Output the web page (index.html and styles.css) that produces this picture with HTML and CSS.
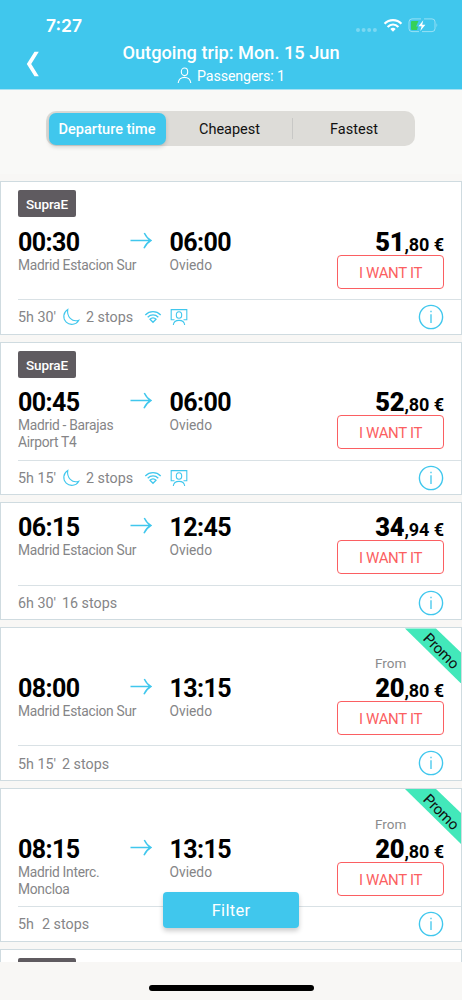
FILE: index.html
```
<!DOCTYPE html>
<html lang="en">
<head>
<meta charset="utf-8">
<title>Outgoing trip</title>
<link rel="stylesheet" href="styles.css">
</head>
<body>
<svg class="defs" width="0" height="0">
  <symbol id="arrow" viewBox="0 0 22 18"><path d="M0.5 8.500H20.500M14.300 1C15.800 4 17.800 6.800 20.800 8.500C17.800 10.200 15.500 13 14 16.200"/></symbol>
  <symbol id="moon" viewBox="0 0 18 18"><path d="M5.800 1.400A8 8 0 1 0 16.800 12.200C10 14.500 4.500 8.500 5.800 1.400Z"/></symbol>
  <symbol id="wifi" viewBox="0 0 18 14"><path d="M1.300 5C5.700 .6 12.300 .6 16.700 5M3.700 7.200C6.800 4.200 11.200 4.200 14.300 7.200M6 9.300C7.700 7.500 10.300 7.500 12 9.300L9 12.300Z"/></symbol>
  <symbol id="screen" viewBox="0 0 18 18"><path d="M4.500 11.800H1.200V1.600H16.800V11.800H13.500M3.300 17C4 10.800 14 10.800 14.700 17"/><ellipse cx="9" cy="7" rx="2.700" ry="3.300"/></symbol>
  <symbol id="info" viewBox="0 0 26 26"><circle cx="13" cy="13" r="11.600" stroke-width="1.400"/><path d="M13 10.300V19M13 6.800V8.300" stroke-width="1.300"/></symbol>
</svg>
<div class="screen">
  <header class="header">
    <div class="status">
      <span class="clock">7:27</span>
      <svg class="system" width="84" height="16" viewBox="0 0 84 16">
        <g fill="#fff" opacity=".3"><circle cx="3" cy="12" r="2"/><circle cx="8.600" cy="12" r="2"/><circle cx="14.200" cy="12" r="2"/><circle cx="19.900" cy="12" r="2"/></g>
        <g fill="none" stroke="#fff" stroke-width="2.300"><path d="M29.600 5.800C34.200 .9 41.800 .9 46.400 5.800M32.600 9C35.800 5.900 40.200 5.900 43.400 9"/></g>
        <path d="M35.300 11Q38 8.700 40.700 11L38 13.700Z" fill="#fff"/>
        <path d="M66 .9H57Q54 .9 54 3.900V10.600Q54 13.600 57 13.600H64M69 .9H77Q80 .9 80 3.900V10.600Q80 13.600 77 13.600H67" fill="none" stroke="#fff" stroke-opacity=".45"/>
        <path d="M81.500 5Q83.300 7.200 81.500 9.500Z" fill="#fff" opacity=".45"/>
        <path d="M57 3H63.500L61 8.500H63L62 11.900H57Q56 11.900 56 10.900V4Q56 3 57 3Z" fill="#35d158"/>
        <path d="M68.300 2.300L63.500 8.200H66.600L65.300 13L70.400 6.700H67.200Z" fill="#fff"/>
      </svg>
    </div>
    <div class="nav">
      <svg class="back" width="14" height="26" viewBox="0 0 14 26"><path d="M8.500 .8H12.800L5.200 13L12.800 25.200H8.500L.8 13Z" fill="#fff"/></svg>
      <div class="heading">
        <h1 class="title">Outgoing trip: Mon. 15 Jun</h1>
        <div class="passengers">
          <svg width="15" height="17" viewBox="0 0 15 17" fill="none" stroke="#fff" stroke-width="1.100"><ellipse cx="7.500" cy="4.800" rx="3.200" ry="3.800"/><path d="M1.200 16C1.800 8.500 13.200 8.500 13.800 16"/></svg>
          <span>Passengers: 1</span>
        </div>
      </div>
    </div>
  </header>
  <div class="sort">
    <div class="tabs">
      <div class="tab tab-on"><span>Departure time</span></div>
      <div class="tab tab-mid"><span>Cheapest</span></div>
      <div class="tab"><span>Fastest</span></div>
    </div>
  </div>
  <main class="list">
    <article class="card">
      <div class="head"><span class="badge">SupraE</span></div>
      <div class="trip">
        <div class="route">
          <span class="time">00:30</span><svg class="arrow"><use href="#arrow"/></svg><span class="time">06:00</span>
          <span class="place from-place">Madrid Estacion Sur</span><span class="place">Oviedo</span>
        </div>
        <div class="buy"><div class="price"><b>51</b>,80 <i>€</i></div><div class="want">I WANT IT</div></div>
      </div>
      <div class="foot"><span class="dur">5h 30'</span><svg class="moon"><use href="#moon"/></svg><span class="stops">2 stops</span><svg class="wifi"><use href="#wifi"/></svg><svg class="media"><use href="#screen"/></svg><svg class="info"><use href="#info"/></svg></div>
    </article>
    <article class="card">
      <div class="head"><span class="badge">SupraE</span></div>
      <div class="trip">
        <div class="route">
          <span class="time">00:45</span><svg class="arrow"><use href="#arrow"/></svg><span class="time">06:00</span>
          <span class="place from-place">Madrid - Barajas<br>Airport T4</span><span class="place">Oviedo</span>
        </div>
        <div class="buy"><div class="price"><b>52</b>,80 <i>€</i></div><div class="want">I WANT IT</div></div>
      </div>
      <div class="foot"><span class="dur">5h 15'</span><svg class="moon"><use href="#moon"/></svg><span class="stops">2 stops</span><svg class="wifi"><use href="#wifi"/></svg><svg class="media"><use href="#screen"/></svg><svg class="info"><use href="#info"/></svg></div>
    </article>
    <article class="card card-short">
      <div class="trip">
        <div class="route">
          <span class="time">06:15</span><svg class="arrow"><use href="#arrow"/></svg><span class="time">12:45</span>
          <span class="place from-place">Madrid Estacion Sur</span><span class="place">Oviedo</span>
        </div>
        <div class="buy"><div class="price"><b>34</b>,94 <i>€</i></div><div class="want">I WANT IT</div></div>
      </div>
      <div class="foot"><span class="dur">6h 30'</span><span class="stops">16 stops</span><svg class="info"><use href="#info"/></svg></div>
    </article>
    <article class="card">
      <div class="head"><span class="from">From</span></div>
      <div class="promo"><span>Promo</span></div>
      <div class="trip">
        <div class="route">
          <span class="time">08:00</span><svg class="arrow"><use href="#arrow"/></svg><span class="time">13:15</span>
          <span class="place from-place">Madrid Estacion Sur</span><span class="place">Oviedo</span>
        </div>
        <div class="buy"><div class="price"><b>20</b>,80 <i>€</i></div><div class="want">I WANT IT</div></div>
      </div>
      <div class="foot"><span class="dur">5h 15'</span><span class="stops">2 stops</span><svg class="info"><use href="#info"/></svg></div>
    </article>
    <article class="card">
      <div class="head"><span class="from">From</span></div>
      <div class="promo"><span>Promo</span></div>
      <div class="trip">
        <div class="route">
          <span class="time">08:15</span><svg class="arrow"><use href="#arrow"/></svg><span class="time">13:15</span>
          <span class="place from-place">Madrid Interc.<br>Moncloa</span><span class="place">Oviedo</span>
        </div>
        <div class="buy"><div class="price"><b>20</b>,80 <i>€</i></div><div class="want">I WANT IT</div></div>
      </div>
      <div class="foot"><span class="dur dur-hours">5h</span><span class="stops">2 stops</span><svg class="info"><use href="#info"/></svg></div>
    </article>
    <article class="card">
      <div class="head"><span class="badge"></span></div>
    </article>
  </main>
  <div class="filter">Filter</div>
  <footer class="home"><div class="home-bar"></div></footer>
</div>
</body>
</html>
```
FILE: styles.css
```
* { box-sizing: border-box; }
body { margin: 0; background: #f8f7f5; font-family: Roboto, "Liberation Sans", sans-serif; }
.defs { position: absolute; }
.screen { position: relative; width: 462px; height: 1000px; display: flex; flex-direction: column; overflow: hidden; white-space: nowrap; }

.header { height: 90px; flex: none; border-bottom: 1px solid #a9e2f3; background: #40c7ed; color: #fff; }
.status { height: 42px; padding: 15px 23px 0 46px; display: flex; justify-content: space-between; }
.clock { font: 600 17.500px/22px Inter, sans-serif; }
.system { margin-top: 3px; }
.nav { display: flex; }
.back { margin: 9px 0 0 26px; }
.heading { flex: 1; padding-right: 40px; text-align: center; }
.title { margin: 0; font-size: 18.200px; line-height: 21px; font-weight: 500; }
.passengers { display: flex; justify-content: center; gap: 5px; font-size: 14.200px; line-height: 26px; letter-spacing: -.1px; }
.passengers svg { margin-top: 4px; }

.sort { height: 84px; flex: none; padding: 21px 47px 0 46px; background: #f9f9f7; }
.tabs { display: grid; grid-template-columns: 117px 127px 1fr; height: 35px; padding: 2px 0 2px 3px; border-radius: 10px; background: #dddcd8; }
.tab { display: flex; align-items: center; justify-content: center; font-size: 14.500px; line-height: 31px; color: #111; }
.tab span { padding-top: 1px; }
.tab-on { border-radius: 7px; background: #40c7ed; color: #fff; font-weight: 500; box-shadow: 0 2px 4px rgba(0,0,0,.16); }
.tab-on span { margin-left: -1px; }
.tab-mid { position: relative; }
.tab-mid::after { content: ""; position: absolute; right: 0; top: 5px; width: 1px; height: 21px; background: #c8c8c6; }

.list { height: 788px; flex: none; padding-top: 7px; display: flex; flex-direction: column; gap: 7px; overflow: hidden; }
.card { position: relative; flex: none; height: 153.700px; border: 1px solid #cfdbe0; background: #fff; display: flex; flex-direction: column; overflow: hidden; }
.card-short { height: 118px; }
.head { height: 35.700px; flex: none; padding: 8px 17px 0; display: flex; }
.badge { width: 58px; height: 27px; border-radius: 2px; background: #5f5b60; color: #fff; font-size: 13.500px; font-weight: 500; line-height: 28px; letter-spacing: -.1px; text-align: center; }
.from { margin-left: 357px; padding-top: 19px; font-size: 13.500px; line-height: 17px; color: #8b8b8d; }
.trip { height: 81.300px; flex: none; padding: 10px 17px 0; display: flex; justify-content: space-between; }
.route { display: grid; grid-template-columns: 112px 39.500px 90px; grid-template-rows: 28px auto; align-content: start; }
.time { font-size: 25px; line-height: 30px; font-weight: 700; letter-spacing: -.6px; color: #000; }
.arrow { width: 22px; height: 18px; margin-top: 4px; fill: none; stroke: #40c7ed; stroke-width: 1.500px; }
.place { padding-top: 1px; font-size: 13.800px; line-height: 17px; letter-spacing: -.28px; color: #858587; }
.place:not(.from-place) { letter-spacing: 0; }
.from-place { grid-column: span 2; }
.buy { width: 107px; }
.price { height: 27px; line-height: 28px; text-align: right; font-size: 18px; font-weight: 700; letter-spacing: -.1px; color: #000; }
.price b { font-size: 25.500px; }
.price i { font-style: normal; letter-spacing: 0; }
.want { height: 34px; border: 1.500px solid #fb5f62; border-radius: 4px; color: #fb5f62; font-size: 15px; line-height: 34px; letter-spacing: -.35px; text-align: center; }
.foot { flex: 1; margin-left: 17px; padding-right: 17.500px; border-top: 1px solid #d9e1e5; display: flex; align-items: center; font-size: 14.300px; line-height: 18px; color: #858587; }
.foot span { padding-top: 1px; }
.foot svg { flex: none; fill: none; stroke: #40c7ed; stroke-width: 1.100px; }
.dur { width: 44px; }
.dur-hours { width: 24px; }
.foot .moon { width: 18px; height: 18px; margin-right: 6px; }
.foot .wifi { width: 18px; height: 14px; margin-left: 11px; stroke-width: 1.300px; }
.foot .media { width: 18px; height: 18px; margin-left: 8px; }
.foot .info { width: 26px; height: 26px; margin-left: auto; }
.promo { position: absolute; right: 0; top: 0; width: 56px; height: 55px; background: #42e8ba; clip-path: polygon(0 0, 31px 0, 100% 24px, 100% 100%); }
.promo span { position: absolute; left: 13px; top: 15px; width: 46px; text-align: center; font-size: 15px; line-height: 16px; letter-spacing: -.3px; color: #111; transform: rotate(45deg); }
.filter { position: absolute; left: 163px; top: 892px; width: 136px; height: 36px; border-radius: 4px; background: #40c7ed; color: #fff; font-size: 16.500px; line-height: 38px; letter-spacing: .3px; text-align: center; box-shadow: 0 3px 5px rgba(0,0,0,.2); }
.home { flex: 1; padding-top: 23px; background: #f8f7f5; }
.home-bar { width: 165px; height: 6px; margin: 0 auto; border-radius: 3px; background: #000; }
```
